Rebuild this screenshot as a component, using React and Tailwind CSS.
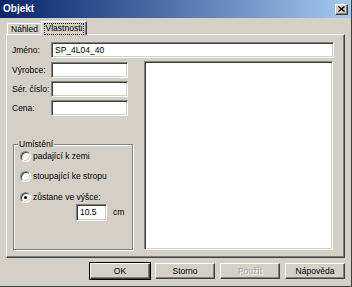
import React from 'react';

const field =
  'bg-white border border-t-[#808080] border-l-[#808080] border-b-white border-r-white shadow-[inset_1px_1px_0_#404040,inset_-1px_-1px_0_#d4d0c8]';
const raised =
  'bg-[#d4d0c8] border border-t-white border-l-white border-b-[#404040] border-r-[#404040] shadow-[inset_-1px_-1px_0_#808080]';

function Radio({ label, checked }) {
  return (
    <div className="flex items-center h-[12px] gap-[2px]">
      <span className={`w-[11px] h-[11px] rounded-full flex items-center justify-center ${field}`}>
        {checked && <span className="w-[3px] h-[3px] rounded-full bg-black" />}
      </span>
      <span>{label}</span>
    </div>
  );
}

function Button({ children, isDefault, disabled }) {
  return (
    <div
      className={`w-[60px] h-[16px] flex items-center justify-center ${raised} ${
        isDefault ? 'outline outline-1 outline-black' : ''
      } ${disabled ? 'text-[#a0a0a0] [text-shadow:1px_1px_0_#fff]' : ''}`}
    >
      {children}
    </div>
  );
}

export default function App() {
  return (
    <div className="w-[352px] h-[287px] bg-[#d4d0c8] border-r border-b border-r-[#404040] border-b-[#404040] flex flex-col font-['Liberation_Sans',Arial,sans-serif] text-[8.5px] text-black leading-none">
      {/* Title bar */}
      <div className="h-[18px] flex items-center justify-between pl-[3px] pr-[3px] bg-linear-to-r from-[#0a246a] to-[#a6caf0]">
        <span className="text-white font-bold text-[10px]">Objekt</span>
        <div className={`w-[13px] h-[11px] flex items-center justify-center ${raised}`}>
          <svg width="7" height="6" viewBox="0 0 7 6">
            <path d="M0.5 0.5 L6.5 5.5 M6.5 0.5 L0.5 5.5" stroke="black" strokeWidth="1.4" />
          </svg>
        </div>
      </div>

      {/* Tabs */}
      <div className="h-[16px] flex items-end pl-[7px]">
        <div className="w-[34px] h-[11px] flex items-center justify-center border-t border-l border-t-white border-l-white rounded-tl-[2px]">
          Náhled
        </div>
        <div className="relative z-10 w-[46px] h-[14px] -mb-[1px] bg-[#d4d0c8] flex items-start justify-center pt-[2px] border-t border-l border-r border-t-white border-l-white border-r-[#404040] shadow-[inset_-1px_0_0_#808080]">
          <span className="outline outline-1 outline-dotted outline-black px-[1px] pb-[1px]">Vlastnosti</span>
        </div>
      </div>

      {/* Panel */}
      <div className="ml-[6px] w-[339px] h-[224px] border border-t-white border-l-white border-b-[#404040] border-r-[#404040] shadow-[inset_-1px_-1px_0_#808080] flex flex-col">
        <div className="mt-[7px] flex items-center pl-[5px] pr-[10px]">
          <span className="w-[39px]">Jméno:</span>
          <div className={`flex-1 h-[16px] flex items-center pl-[3px] ${field}`}>SP_4L04_40</div>
        </div>

        <div className="mt-[3px] flex pl-[5px]">
          <div className="w-[122px] pt-[1px] flex flex-col">
            <div className="flex flex-col gap-[3px]">
              {['Výrobce:', 'Sér. číslo:', 'Cena:'].map((l) => (
                <div key={l} className="flex items-center h-[16px]">
                  <span className="w-[39px]">{l}</span>
                  <div className={`w-[77px] h-[16px] ${field}`} />
                </div>
              ))}
            </div>

            {/* Umístění group */}
            <div className="relative mt-[28px] ml-[1px] w-[120px] h-[106px] border border-[#808080] shadow-[inset_1px_1px_0_#fff,1px_1px_0_#fff] pt-[5px] pl-[6px] flex flex-col">
              <span className="absolute -top-[5px] left-[4px] px-[1px] bg-[#d4d0c8]">Umístění</span>
              <Radio label="padající k zemi" />
              <div className="mt-[8px]">
                <Radio label="stoupající ke stropu" />
              </div>
              <div className="mt-[9px]">
                <Radio label="zůstane ve výšce:" checked />
              </div>
              <div className="mt-[1px] ml-[56px] flex items-center">
                <div className={`w-[31px] h-[17px] flex items-center pl-[3px] ${field}`}>10.5</div>
                <span className="ml-[6px]">cm</span>
              </div>
            </div>
          </div>

          <div className={`ml-[10px] w-[189px] h-[189px] ${field}`} />
        </div>
      </div>

      {/* Buttons */}
      <div className="mt-[5px] flex justify-end gap-[5px] pr-[6px]">
        <Button isDefault>OK</Button>
        <Button>Storno</Button>
        <Button disabled>Použít</Button>
        <Button>Nápověda</Button>
      </div>
    </div>
  );
}
